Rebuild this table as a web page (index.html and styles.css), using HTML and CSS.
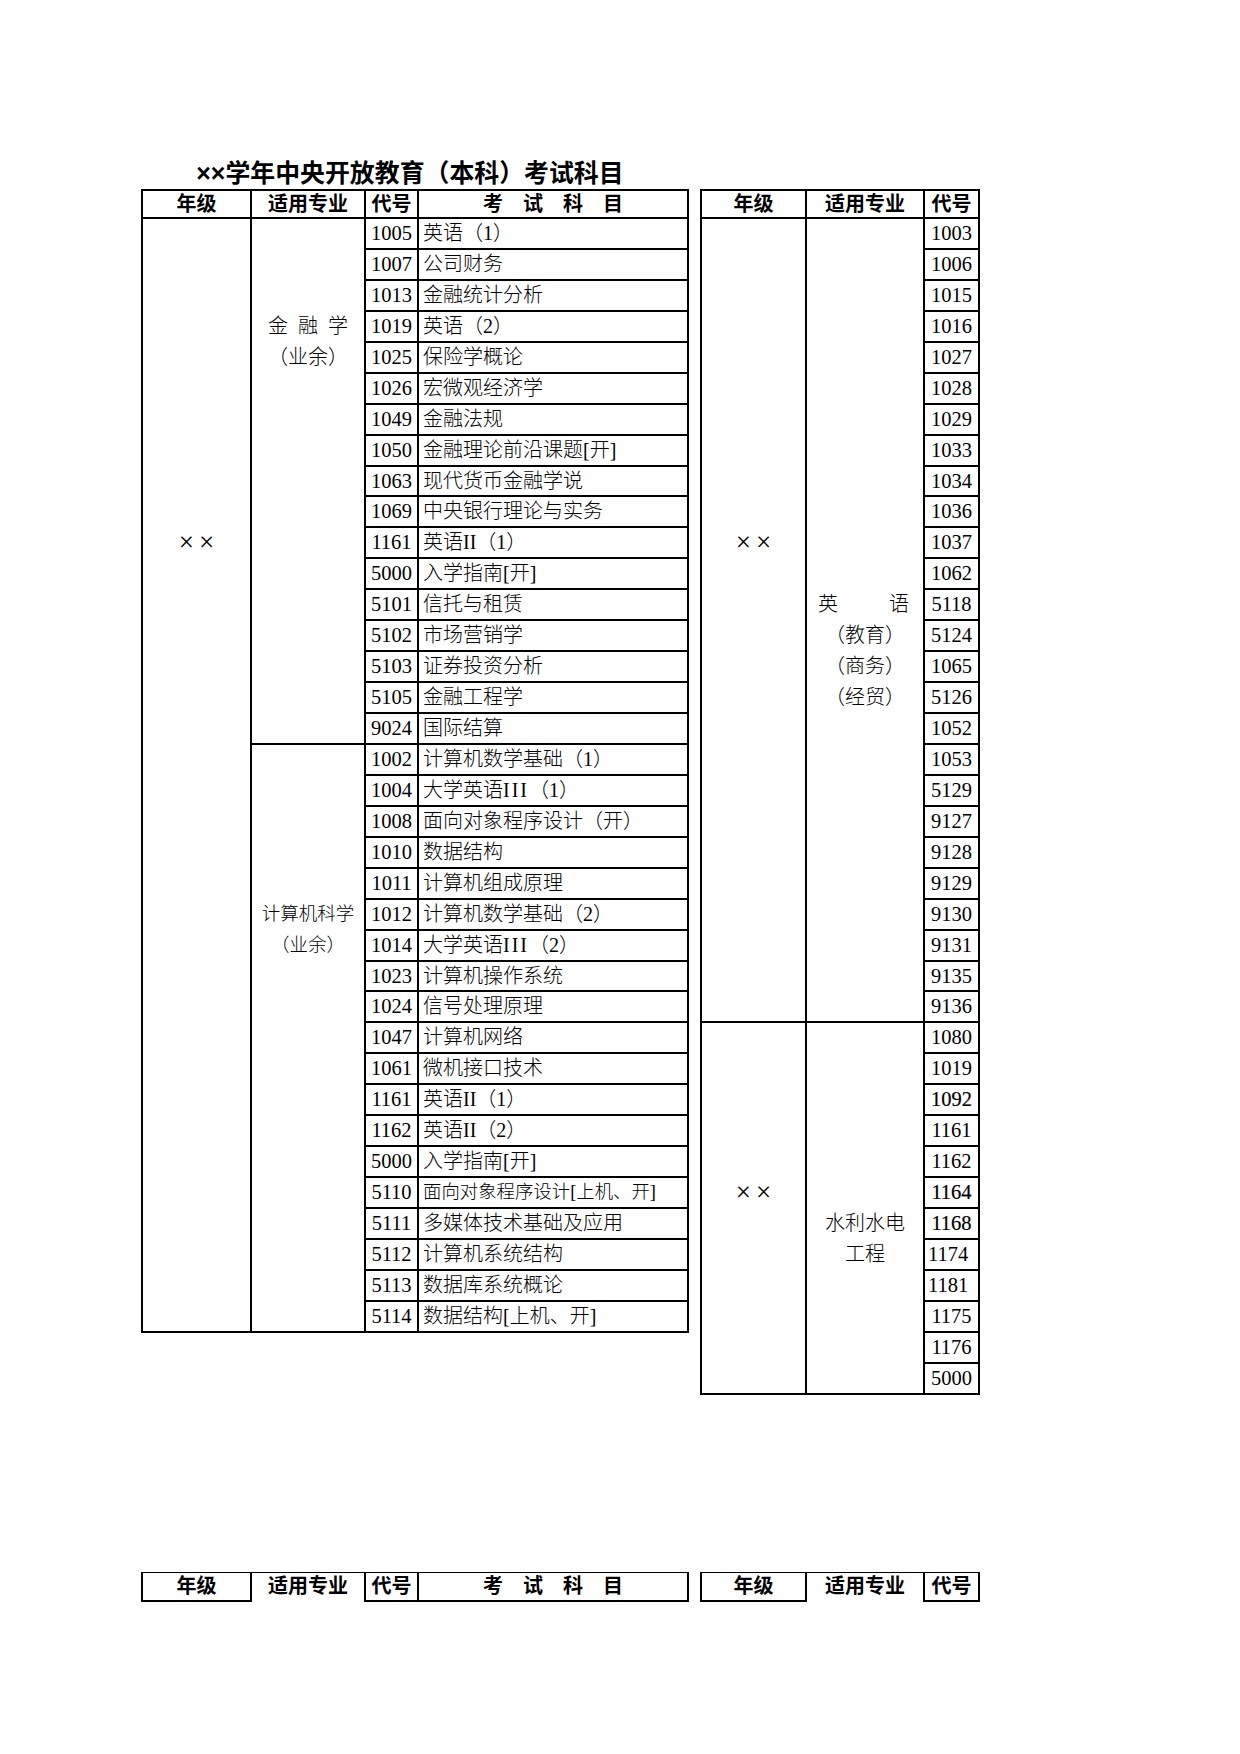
FILE: index.html
```html
<!DOCTYPE html>
<html lang="zh-CN">
<head>
<meta charset="utf-8">
<title>××学年中央开放教育（本科）考试科目</title>
<link rel="stylesheet" href="styles.css">
</head>
<body>
<main class="page">
  <h1 class="title">××学年中央开放教育（本科）考试科目</h1>

  <div class="tbl tbl-l">
    <div class="cell hd">年级</div>
    <div class="cell hd">适用专业</div>
    <div class="cell hd">代号</div>
    <div class="cell hd">考　试　科　目</div>

    <div class="cell yr yr-l">××</div>
    <div class="cell maj maj-fin"><div class="spread">金融学</div><div>（业余）</div></div>
    <div class="cell maj maj-cs"><div>计算机科学</div><div>（业余）</div></div>

    <div class="cell code">1005</div><div class="cell subj">英语（1）</div>
    <div class="cell code">1007</div><div class="cell subj">公司财务</div>
    <div class="cell code">1013</div><div class="cell subj">金融统计分析</div>
    <div class="cell code">1019</div><div class="cell subj">英语（2）</div>
    <div class="cell code">1025</div><div class="cell subj">保险学概论</div>
    <div class="cell code">1026</div><div class="cell subj">宏微观经济学</div>
    <div class="cell code">1049</div><div class="cell subj">金融法规</div>
    <div class="cell code">1050</div><div class="cell subj">金融理论前沿课题[开]</div>
    <div class="cell code">1063</div><div class="cell subj">现代货币金融学说</div>
    <div class="cell code">1069</div><div class="cell subj">中央银行理论与实务</div>
    <div class="cell code">1161</div><div class="cell subj">英语II（1）</div>
    <div class="cell code">5000</div><div class="cell subj">入学指南[开]</div>
    <div class="cell code">5101</div><div class="cell subj">信托与租赁</div>
    <div class="cell code">5102</div><div class="cell subj">市场营销学</div>
    <div class="cell code">5103</div><div class="cell subj">证券投资分析</div>
    <div class="cell code">5105</div><div class="cell subj">金融工程学</div>
    <div class="cell code">9024</div><div class="cell subj">国际结算</div>

    <div class="cell code">1002</div><div class="cell subj">计算机数学基础（1）</div>
    <div class="cell code">1004</div><div class="cell subj">大学英语<span class="roman">III</span>（1）</div>
    <div class="cell code">1008</div><div class="cell subj">面向对象程序设计（开）</div>
    <div class="cell code">1010</div><div class="cell subj">数据结构</div>
    <div class="cell code">1011</div><div class="cell subj">计算机组成原理</div>
    <div class="cell code">1012</div><div class="cell subj">计算机数学基础（2）</div>
    <div class="cell code">1014</div><div class="cell subj">大学英语<span class="roman">III</span>（2）</div>
    <div class="cell code">1023</div><div class="cell subj">计算机操作系统</div>
    <div class="cell code">1024</div><div class="cell subj">信号处理原理</div>
    <div class="cell code">1047</div><div class="cell subj">计算机网络</div>
    <div class="cell code">1061</div><div class="cell subj">微机接口技术</div>
    <div class="cell code">1161</div><div class="cell subj">英语II（1）</div>
    <div class="cell code">1162</div><div class="cell subj">英语II（2）</div>
    <div class="cell code">5000</div><div class="cell subj">入学指南[开]</div>
    <div class="cell code">5110</div><div class="cell subj small">面向对象程序设计[上机、开]</div>
    <div class="cell code">5111</div><div class="cell subj">多媒体技术基础及应用</div>
    <div class="cell code">5112</div><div class="cell subj">计算机系统结构</div>
    <div class="cell code">5113</div><div class="cell subj">数据库系统概论</div>
    <div class="cell code">5114</div><div class="cell subj">数据结构[上机、开]</div>
  </div>

  <div class="tbl tbl-r">
    <div class="cell hd">年级</div>
    <div class="cell hd">适用专业</div>
    <div class="cell hd">代号</div>

    <div class="cell yr yr-r1">××</div>
    <div class="cell maj maj-en"><div class="justify"><span>英</span><span>语</span></div><div>（教育）</div><div>（商务）</div><div>（经贸）</div></div>
    <div class="cell yr yr-r2">××</div>
    <div class="cell maj maj-hy"><div>水利水电</div><div>工程</div></div>

    <div class="cell code">1003</div>
    <div class="cell code">1006</div>
    <div class="cell code">1015</div>
    <div class="cell code">1016</div>
    <div class="cell code">1027</div>
    <div class="cell code">1028</div>
    <div class="cell code">1029</div>
    <div class="cell code">1033</div>
    <div class="cell code">1034</div>
    <div class="cell code">1036</div>
    <div class="cell code">1037</div>
    <div class="cell code">1062</div>
    <div class="cell code">5118</div>
    <div class="cell code">5124</div>
    <div class="cell code">1065</div>
    <div class="cell code">5126</div>
    <div class="cell code">1052</div>
    <div class="cell code">1053</div>
    <div class="cell code">5129</div>
    <div class="cell code">9127</div>
    <div class="cell code">9128</div>
    <div class="cell code">9129</div>
    <div class="cell code">9130</div>
    <div class="cell code">9131</div>
    <div class="cell code">9135</div>
    <div class="cell code">9136</div>

    <div class="cell code">1080</div>
    <div class="cell code">1019</div>
    <div class="cell code dk">1092</div>
    <div class="cell code">1161</div>
    <div class="cell code">1162</div>
    <div class="cell code dk">1164</div>
    <div class="cell code dk">1168</div>
    <div class="cell code la">1174</div>
    <div class="cell code la">1181</div>
    <div class="cell code">1175</div>
    <div class="cell code">1176</div>
    <div class="cell code">5000</div>
  </div>

  <div class="foot foot-l">
    <div class="fc box">年级</div>
    <div class="fc">适用专业</div>
    <div class="fc box">代号</div>
    <div class="fc box nl">考　试　科　目</div>
  </div>
  <div class="foot foot-r">
    <div class="fc box">年级</div>
    <div class="fc">适用专业</div>
    <div class="fc box">代号</div>
  </div>
</main>
</body>
</html>
```

FILE: styles.css
```css
* {
  box-sizing: border-box;
}

body {
  margin: 0;
  background: #ffffff;
  color: #000000;
}

.page {
  display: grid;
  grid-template-columns: 548px 280px;
  column-gap: 11px;
  align-items: start;
  padding: 158px 0 0 141px;
}

.title {
  grid-column: 1;
  grid-row: 1;
  margin: 0 0 1px;
  padding-right: 10px;
  text-align: center;
  font: 700 24.9px/30px "Liberation Sans", "Noto Sans CJK SC", sans-serif;
  white-space: nowrap;
}

/* grid tables: black background shows through 2px gaps as rules */
.tbl {
  display: grid;
  gap: 2px;
  padding: 2px;
  background: #000000;
}

.tbl-l {
  grid-column: 1;
  grid-row: 2;
  grid-template-columns: 107px 112px 51px 268px;
  grid-template-rows: 26px repeat(36, 28.94px);
}

.tbl-r {
  grid-column: 2;
  grid-row: 2;
  grid-template-columns: 103px 116px 53px;
  grid-template-rows: 26px repeat(38, 28.94px);
}

.cell {
  background: #ffffff;
  font: 300 20px/28.94px "Liberation Serif", "Noto Sans CJK SC", serif;
  white-space: nowrap;
  overflow: hidden;
}

.hd {
  font: 700 20px/26px "Liberation Sans", "Noto Sans CJK SC", sans-serif;
  text-align: center;
}

.code {
  text-align: center;
  font-size: 20.5px;
}

.tbl-l .code {
  grid-column: 3;
}

.tbl-l .subj {
  grid-column: 4;
}

.tbl-r .code {
  grid-column: 3;
}

.subj {
  padding-left: 4px;
}

.subj.small {
  font-size: 18.4px;
}

.roman {
  letter-spacing: 2px;
}

.dk {
  -webkit-text-stroke: 0.2px #000000;
}

.la {
  text-align: left;
  padding-left: 3px;
}

/* spanning cells */
.yr {
  text-align: center;
  font-family: "Liberation Serif", serif;
  font-size: 27px;
  letter-spacing: 5px;
  text-indent: 5px;
  line-height: 28.94px;
}

.maj {
  text-align: center;
  line-height: 30.94px;
}

.yr-l {
  grid-column: 1;
  grid-row: 2 / span 36;
  padding-top: 309.4px;
}

.maj-fin {
  grid-column: 2;
  grid-row: 2 / span 17;
  padding-top: 91.8px;
}

.maj-cs {
  grid-column: 2;
  grid-row: 19 / span 19;
  padding-top: 153.7px;
  font-size: 18.5px;
}

.spread {
  letter-spacing: 10px;
  text-indent: 10px;
}

.yr-r1 {
  grid-column: 1;
  grid-row: 2 / span 26;
  padding-top: 309.4px;
}

.maj-en {
  grid-column: 2;
  grid-row: 2 / span 26;
  padding-top: 370.3px;
}

.justify {
  display: flex;
  justify-content: space-between;
  padding: 0 14px 0 11px;
}

.yr-r2 {
  grid-column: 1;
  grid-row: 28 / span 12;
  padding-top: 154.7px;
}

.maj-hy {
  grid-column: 2;
  grid-row: 28 / span 12;
  padding-top: 184.6px;
}

/* repeated header row at the foot of the page */
.foot {
  display: grid;
  grid-row: 3;
  margin-top: 177.5px;
  height: 30px;
}

.foot-l {
  grid-column: 1;
  grid-template-columns: 111px 112px 55px 270px;
}

.foot-r {
  grid-column: 2;
  grid-template-columns: 107px 116px 57px;
}

.fc {
  border-top: 1px solid #000000;
  font: 700 20px/27px "Liberation Sans", "Noto Sans CJK SC", sans-serif;
  text-align: center;
  white-space: nowrap;
}

.fc.box {
  border: 2px solid #000000;
  border-top-width: 1px;
}

.fc.box.nl {
  border-left: 0;
}
```
